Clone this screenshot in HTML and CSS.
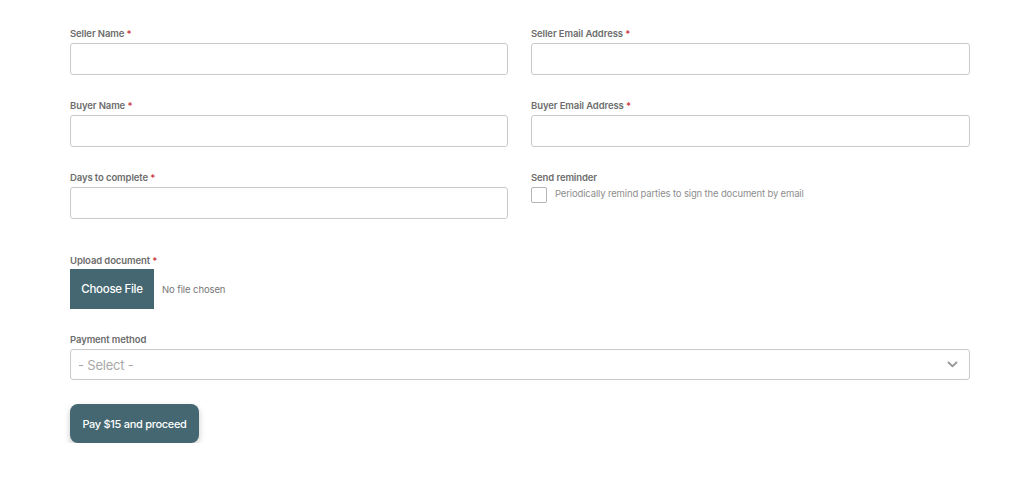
FILE: index.html
```html
<!DOCTYPE html>
<html lang="en">
<head>
<meta charset="utf-8">
<title>Document form</title>
<link rel="stylesheet" href="styles.css">
</head>
<body>
<form class="form">
  <div class="grid">
    <div class="field">
      <label class="label">Seller Name <span class="req">*</span></label>
      <input class="input" type="text">
    </div>
    <div class="field">
      <label class="label">Seller Email Address <span class="req">*</span></label>
      <input class="input" type="email">
    </div>
    <div class="field">
      <label class="label">Buyer Name <span class="req">*</span></label>
      <input class="input" type="text">
    </div>
    <div class="field">
      <label class="label">Buyer Email Address <span class="req">*</span></label>
      <input class="input" type="email">
    </div>
    <div class="field">
      <label class="label">Days to complete <span class="req">*</span></label>
      <input class="input" type="text">
    </div>
    <div class="field">
      <label class="label">Send reminder</label>
      <div class="check-row">
        <span class="checkbox"></span>
        <span class="check-text">Periodically remind parties to sign the document by email</span>
      </div>
    </div>
  </div>

  <div class="field upload">
    <label class="label">Upload document <span class="req">*</span></label>
    <div class="file-row">
      <span class="file-btn">Choose File</span>
      <span class="file-name">No file chosen</span>
    </div>
  </div>

  <div class="field payment">
    <label class="label">Payment method</label>
    <div class="select">
      <span class="select-text">- Select -</span>
      <svg class="chevron" width="11" height="7" viewBox="0 0 11 7"><path d="M1.5 1.5 L5.5 5.2 L9.5 1.5" fill="none" stroke="#9a9a9a" stroke-width="1.9" stroke-linecap="round" stroke-linejoin="round"/></svg>
    </div>
  </div>

  <button class="submit" type="button">Pay $15 and proceed</button>
</form>
</body>
</html>
```

FILE: styles.css
```css
* { box-sizing: border-box; }
html, body { margin: 0; background: #ffffff; }
body {
  font-family: Inter, "Open Sans", "Liberation Sans", sans-serif;
  color: #555;
}
.form {
  width: 900px;
  margin: 0 0 0 70px;
  padding-top: 27px;
  display: flex;
  flex-direction: column;
}
.grid {
  display: grid;
  grid-template-columns: 438px 439px;
  column-gap: 23px;
  row-gap: 24px;
}
.field { display: flex; flex-direction: column; }
.label {
  font-size: 9.5px;
  font-weight: 600;
  color: #6d6d6d;
  line-height: 14px;
  margin-bottom: 2px;
  letter-spacing: -0.1px;
}
.req { color: #c8323c; }
.input {
  height: 32px;
  border: 1px solid #c9c9c9;
  border-radius: 3px;
  background: #fff;
  width: 100%;
  padding: 0 8px;
  font: inherit;
}
.check-row { display: flex; align-items: center; gap: 8px; }
.checkbox {
  width: 16px;
  height: 16px;
  border: 1px solid #b5b5b5;
  border-radius: 2px;
  background: #fff;
}
.check-text {
  font-size: 9.5px;
  color: #8e8e8e;
  letter-spacing: -0.15px;
  margin-top: -3px;
}
.upload { margin-top: 35px; }
.upload .label { margin-bottom: 1px; }
.file-row { display: flex; align-items: center; gap: 8px; }
.file-btn {
  display: inline-flex;
  align-items: center;
  justify-content: center;
  width: 84px;
  height: 40px;
  background: #446771;
  color: #fff;
  font-size: 11.5px;
  font-weight: 500;
  letter-spacing: -0.3px;
}
.file-name {
  font-size: 9.5px;
  color: #777;
  letter-spacing: -0.1px;
}
.payment { margin-top: 24px; }
.select {
  height: 31px;
  border: 1px solid #c9c9c9;
  border-radius: 3px;
  display: flex;
  align-items: center;
  justify-content: space-between;
  padding: 0 11px 0 7px;
}
.select-text {
  font-size: 13px;
  color: #a8a8a8;
  letter-spacing: -0.2px;
}
.submit {
  margin-top: 24px;
  align-self: flex-start;
  width: 129px;
  height: 39px;
  border: none;
  border-radius: 8px;
  background: #446771;
  color: #fff;
  font-family: inherit;
  font-size: 11px;
  font-weight: 500;
  letter-spacing: -0.3px;
  box-shadow: 0 3px 6px rgba(0, 0, 0, 0.22);
  cursor: pointer;
}
```
